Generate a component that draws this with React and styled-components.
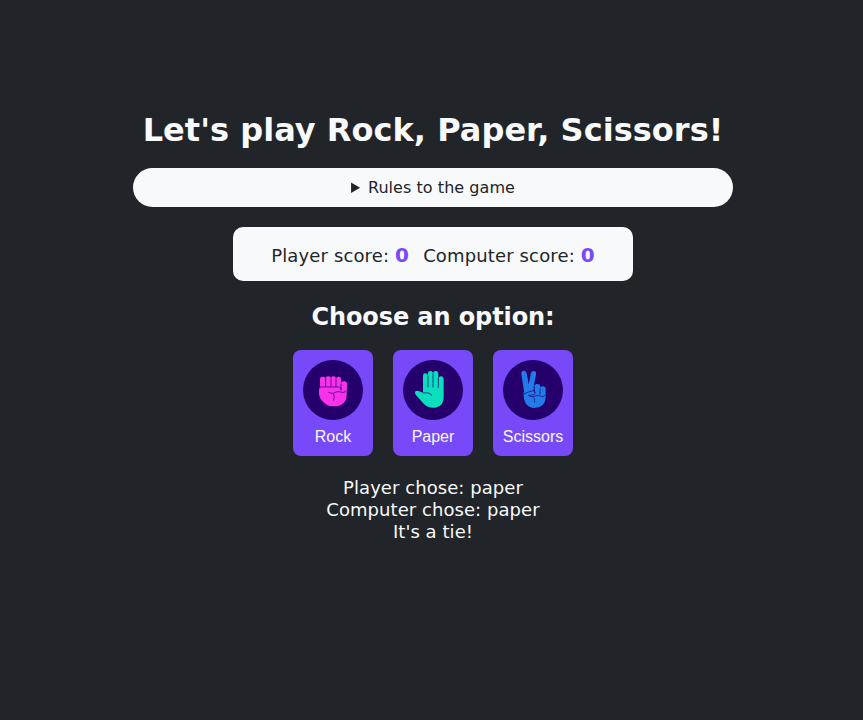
import React from "react";
import styled, { createGlobalStyle } from "styled-components";

const GlobalStyle = createGlobalStyle`
  * { box-sizing: border-box; }
  body {
    margin: 0;
    background: #212529;
    color: #f8f9fa;
    font-family: Verdana, "DejaVu Sans", sans-serif;
  }
`;

const Game = styled.main`
  min-height: 720px;
  padding: 111px 0 0 3px;
  display: flex;
  flex-direction: column;
  align-items: center;
  white-space: nowrap;
`;

const Title = styled.h1`
  margin: 0 0 18px;
  font-size: 32px;
  line-height: 39px;
  letter-spacing: 0.03px;
`;

const Rules = styled.details`
  width: 600px;
  padding: 10px;
  border-radius: 20px;
  background: #f8f9fa;
  color: #212529;
  font-size: 16px;
  line-height: 19px;
  letter-spacing: 0.05px;
  text-align: center;
`;

const Scores = styled.section`
  width: 400px;
  height: 54px;
  margin-top: 20px;
  padding-top: 2px;
  display: flex;
  align-items: center;
  justify-content: center;
  gap: 14px;
  border-radius: 10px;
  background: #f8f9fa;
  color: #212529;
  font-size: 18px;
  letter-spacing: 0.14px;
`;

const Score = styled.span`
  font-size: 20px;
  font-weight: bold;
  color: #7749f8;
`;

const Subtitle = styled.h2`
  margin: 22px 0 18px;
  font-size: 24px;
  line-height: 29px;
  letter-spacing: -0.1px;
`;

const Options = styled.div`
  display: flex;
  gap: 20px;
`;

const Option = styled.button`
  width: 80px;
  height: 106px;
  padding: 10px 0;
  display: flex;
  flex-direction: column;
  align-items: center;
  gap: 8px;
  border: 0;
  border-radius: 8px;
  background: #7749f8;
  color: #f8f9fa;
  font: 16px/18px "Liberation Sans", Arial, sans-serif;
  cursor: pointer;
`;

const Disc = styled.span`
  width: 60px;
  height: 60px;
  display: grid;
  place-items: center;
  border-radius: 50%;
  background: #25006c;
`;

const Hand = styled.svg`
  width: 40px;
  height: 40px;
  display: block;
  fill: ${({ $color }) => $color};

  .crease {
    fill: none;
    stroke: #25006c;
    stroke-width: 2.6;
    stroke-linecap: round;
    stroke-linejoin: round;
    stroke-opacity: 0.8;
  }
`;

const Results = styled.div`
  margin-top: 21px;
  font-size: 18px;
  line-height: 22px;
  letter-spacing: 0.06px;
  text-align: center;
`;

const RockHand = () => (
  <Hand viewBox="0 0 120 120" $color="#f832ea">
    <rect x="21" y="20" width="17" height="36" rx="7" />
    <rect x="38" y="19" width="16" height="36" rx="7" />
    <rect x="54" y="19" width="15" height="36" rx="7" />
    <rect x="69" y="20" width="15" height="36" rx="7" />
    <rect x="84" y="34" width="18" height="33" rx="8" />
    <path d="M25 50H84V61L101 62V76C101 96 86 109 67 109H56C43 108 35 100 28 93C19 84 17 73 18 59Q18 51 25 50Z" />
    <path className="crease" d="M38 27V49M54 27V49M69 27V49M84 42V60M22 51H80Q84 53 84 58M47 67C55 71 62 71 67 67Q74 63 82 66Q94 71 100 62M62 72Q66 77 62 91" />
  </Hand>
);

const PaperHand = () => (
  <Hand viewBox="0 0 120 120" $color="#09dfbc">
    <path d="M30 67V17Q30 10 37 10Q44 10 45 17V10Q45 3 53 3Q60 3 60 11V10Q61 3 68 3Q76 3 76 12V26Q78 19 84 19Q92 20 92 28V79Q92 113 61 113Q43 113 32 101L8 74Q4 69 7 64Q12 61 19 64L30 68Z" />
    <path className="crease" d="M45 17V51M60 10V51M76 25V53M31 69C42 67 53 69 56 76" />
  </Hand>
);

const ScissorsHand = () => (
  <Hand viewBox="0 0 120 120" $color="#217be9">
    <path d="M25 12Q24 3 32 2Q39 2 41 9L47 43L54 9Q56 2 64 3Q71 5 69 14L62 51L63 61L34 70Z" />
    <rect x="64" y="42" width="18" height="36" rx="8" />
    <rect x="81" y="49" width="17" height="34" rx="8" />
    <path d="M33 65L57 59Q64 62 65 70L82 72L98 75V82Q96 114 64 114Q33 112 32 75Q31 68 33 65Z" />
    <path className="crease" d="M34 71Q45 66 60 62Q69 64 66 72Q60 77 46 76M46 77Q57 82 65 79Q72 75 79 77Q92 84 97 75M64 52V63M81 57V73M61 82Q67 85 65 96" />
  </Hand>
);

const choices = [
  { name: "Rock", Icon: RockHand },
  { name: "Paper", Icon: PaperHand },
  { name: "Scissors", Icon: ScissorsHand },
];

export default function App() {
  return (
    <>
      <GlobalStyle />
      <Game>
        <Title>Let's play Rock, Paper, Scissors!</Title>
        <Rules>
          <summary>Rules to the game</summary>
        </Rules>
        <Scores>
          <span>Player score: <Score>0</Score></span>
          <span>Computer score: <Score>0</Score></span>
        </Scores>
        <Subtitle>Choose an option:</Subtitle>
        <Options>
          {choices.map(({ name, Icon }) => (
            <Option key={name} type="button">
              <Disc><Icon /></Disc>
              {name}
            </Option>
          ))}
        </Options>
        <Results>
          <div>Player chose: paper</div>
          <div>Computer chose: paper</div>
          <div>It's a tie!</div>
        </Results>
      </Game>
    </>
  );
}
